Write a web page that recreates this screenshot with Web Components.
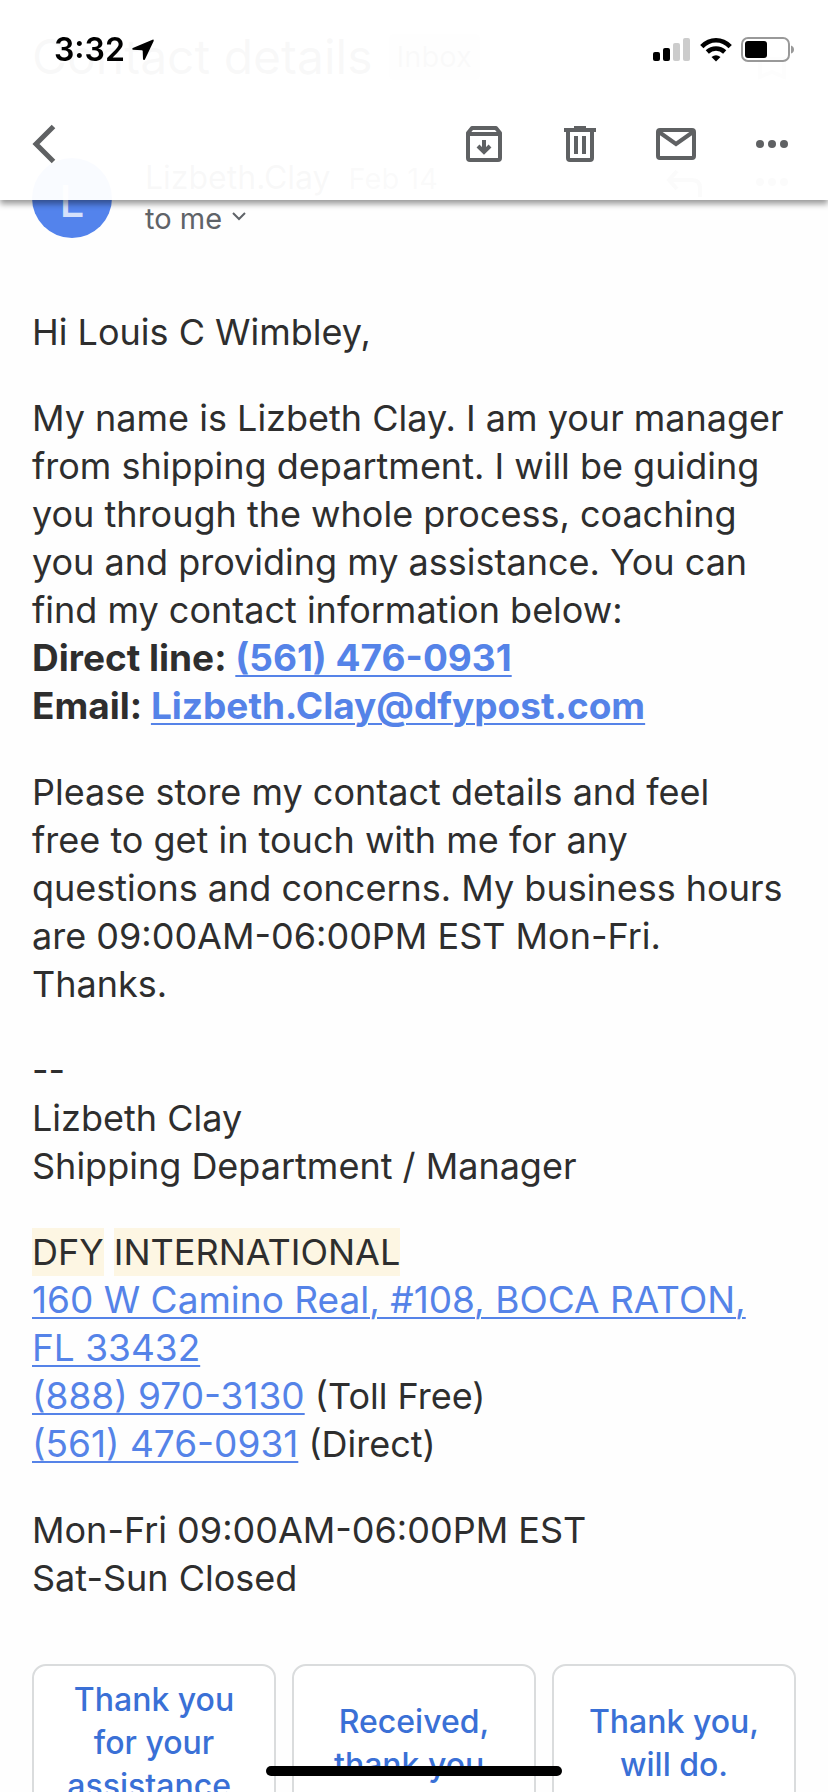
<!DOCTYPE html>
<html lang="en">
<head>
<meta charset="utf-8">
<meta name="viewport" content="width=device-width, initial-scale=1">
<title>Contact details</title>
<style>
  body {
    margin: 0;
    background: #fefefe;
    color: #2e2e2e;
    font-family: Inter, "Liberation Sans", sans-serif;
  }
</style>
</head>
<body>
<mail-screen>
  <status-bar slot="header" time="3:32"></status-bar>
  <mail-toolbar slot="header"></mail-toolbar>

  <mail-subject label="Inbox">Contact details</mail-subject>
  <mail-sender initial="L" name="Lizbeth.Clay" date="Feb 14">to me</mail-sender>

  <mail-body>
    <p>Hi Louis C Wimbley,</p>
    <p>My name is Lizbeth Clay. I am your manager<br>
      from shipping department. I will be guiding<br>
      you through the whole process, coaching<br>
      you and providing my assistance. You can<br>
      find my contact information below:<br>
      <b>Direct line: <a href="tel:+15614760931">(561) 476-0931</a></b><br>
      <b>Email: <a href="mailto:Lizbeth.Clay@dfypost.com">Lizbeth.Clay@dfypost.com</a></b></p>
    <p>Please store my contact details and feel<br>
      free to get in touch with me for any<br>
      questions and concerns. My business hours<br>
      are 09:00AM-06:00PM EST Mon-Fri.<br>
      Thanks.</p>
    <p>--<br>
      Lizbeth Clay<br>
      Shipping Department / Manager</p>
    <p><mark>DFY</mark> <mark>INTERNATIONAL</mark><br>
      <a href="#map">160 W Camino Real, #108, BOCA RATON,<br>FL 33432</a><br>
      <a href="tel:+18889703130">(888) 970-3130</a> (Toll Free)<br>
      <a href="tel:+15614760931">(561) 476-0931</a> (Direct)</p>
    <p>Mon-Fri 09:00AM-06:00PM EST<br>
      Sat-Sun Closed</p>
  </mail-body>

  <reply-row>
    <smart-reply>Thank you<br>for your<br>assistance.</smart-reply>
    <smart-reply>Received,<br>thank you.</smart-reply>
    <smart-reply>Thank you,<br>will do.</smart-reply>
  </reply-row>
</mail-screen>

<script>
// Shared helper: attach a shadow root with the given markup
class BaseElement extends HTMLElement {
  constructor() {
    super();
    const template = document.createElement('template');
    template.innerHTML = this.constructor.markup;
    this.attachShadow({ mode: 'open' });
    this.shadowRoot.appendChild(template.content.cloneNode(true));
  }

  // copy attributes into the elements with the same id
  fill(...names) {
    names.forEach((name) => {
      this.shadowRoot.getElementById(name).textContent = this.getAttribute(name) || '';
    });
  }
}

class MailScreen extends BaseElement {
  static markup = `
    <style>
      :host {
        display: block;
        height: 100vh;
        overflow: hidden;
      }
      header {
        position: fixed;
        top: 0;
        left: 0;
        right: 0;
        z-index: 10;
        background: rgba(255, 255, 255, 0.97);
        box-shadow: 0 4px 6px rgba(0, 0, 0, 0.4);
      }
      main {
        padding: 16px 32px 64px;
      }
      .home {
        position: fixed;
        bottom: 16px;
        left: 50%;
        width: 296px;
        height: 10px;
        margin-left: -148px;
        border-radius: 5px;
        background: #000;
        z-index: 10;
      }
    </style>
    <header><slot name="header"></slot></header>
    <main><slot></slot></main>
    <div class="home"></div>
  `;
}

class StatusBar extends BaseElement {
  static markup = `
    <style>
      :host {
        display: flex;
        align-items: center;
        box-sizing: border-box;
        height: 88px;
        padding: 12px 32px 0 54px;
        color: #000;
      }
      #time {
        font-size: 32px;
        line-height: 40px;
        font-weight: 600;
      }
      .arrow { margin-left: 6px; }
      .right {
        display: flex;
        align-items: center;
        gap: 8px;
        margin-left: auto;
      }
      svg { display: block; }
    </style>
    <span id="time"></span>
    <svg class="arrow" width="24" height="22" viewBox="0 0 24 22">
      <path d="M21.500.7 1.800 9Q.4 10 1.900 10.700l9 .5q.8 0 .8.8l.3 8.200q.8 1.500 1.900.2L22.700 2Q23 .3 21.500.7z"/>
    </svg>
    <div class="right">
      <svg width="40" height="26" viewBox="0 0 40 26">
        <rect x="1" y="15" width="7" height="9" rx="2"/>
        <rect x="11" y="11" width="7" height="13" rx="2"/>
        <g fill="#ccc">
          <rect x="21" y="6" width="7" height="18" rx="2"/>
          <rect x="31" y="1" width="7" height="23" rx="2"/>
        </g>
      </svg>
      <svg width="32" height="26" viewBox="0 0 32 26">
        <g fill="none" stroke="#000" stroke-width="4.600">
          <path d="M1.800 9.600Q8 3.300 16 3.300T30.200 9.600"/>
          <path d="M7.300 15Q11 11.500 16 11.500T24.700 15"/>
        </g>
        <path d="M11.500 20Q16 16.500 20.500 20L16 24.600z"/>
      </svg>
      <svg width="56" height="26" viewBox="0 0 56 26">
        <rect x="2" y="1" width="47" height="23" rx="6" fill="none" stroke="#999" stroke-width="2"/>
        <rect x="5" y="4" width="22" height="17" rx="3"/>
        <path d="M51 8.500q3 1 3 4t-3 4z" fill="#999"/>
      </svg>
    </div>
  `;

  connectedCallback() {
    this.fill('time');
  }
}

class MailToolbar extends BaseElement {
  static markup = `
    <style>
      :host {
        display: flex;
        align-items: center;
        height: 112px;
        padding: 0 8px 0 24px;
      }
      button {
        display: flex;
        align-items: center;
        justify-content: center;
        width: 96px;
        height: 96px;
        padding: 0;
        border: 0;
        background: none;
        color: #5f6163;
      }
      .back {
        justify-content: flex-start;
        margin-right: auto;
      }
    </style>
    <button class="back" aria-label="Back">
      <svg width="48" height="48" viewBox="0 0 48 48" fill="none" stroke="currentColor" stroke-width="5">
        <path d="M29.500 6.500 12 24l17.500 17.500"/>
      </svg>
    </button>
    <button aria-label="Archive">
      <svg width="48" height="48" viewBox="0 0 48 48">
        <path d="M12 8h24l4 5v25q0 2-2 2H10q-2 0-2-2V13z" fill="none" stroke="currentColor" stroke-width="4" stroke-linejoin="round"/>
        <path d="M8 14h32" stroke="currentColor" stroke-width="4"/>
        <path d="M24 20v12M18 26l6 6 6-6" fill="none" stroke="currentColor" stroke-width="4"/>
      </svg>
    </button>
    <button aria-label="Delete">
      <svg width="48" height="48" viewBox="0 0 48 48" fill="none" stroke="currentColor" stroke-width="4">
        <path d="M12 11v27q0 2 2 2h20q2 0 2-2V11M8 10h32M18 8h12M20 16v18M28 16v18"/>
      </svg>
    </button>
    <button aria-label="Mark as unread">
      <svg width="48" height="48" viewBox="0 0 48 48" fill="none" stroke="currentColor" stroke-width="4">
        <rect x="6" y="10" width="36" height="28" rx="2"/>
        <path d="M7 12l17 12 17-12"/>
      </svg>
    </button>
    <button aria-label="More options">
      <svg width="48" height="48" viewBox="0 0 48 48" fill="currentColor">
        <circle cx="12" cy="24" r="4"/><circle cx="24" cy="24" r="4"/><circle cx="36" cy="24" r="4"/>
      </svg>
    </button>
  `;
}

class MailSubject extends BaseElement {
  static markup = `
    <style>
      :host {
        display: flex;
        align-items: center;
        height: 82px;
      }
      h1 {
        margin: 0;
        font-size: 48px;
        line-height: 56px;
        font-weight: 400;
      }
      #label {
        margin-left: 16px;
        padding: 0 8px;
        border-radius: 4px;
        background: #ddd;
        color: #555;
        font-size: 29px;
        line-height: 46px;
      }
      svg {
        margin: 24px 0 0 auto;
      }
    </style>
    <h1><slot></slot></h1>
    <span id="label"></span>
    <svg width="48" height="28" viewBox="0 0 48 28" fill="none" stroke="#bbb" stroke-width="4">
      <path d="M12 22V4h24v18l-12-5z"/>
    </svg>
  `;

  connectedCallback() {
    this.fill('label');
  }
}

class MailSender extends BaseElement {
  static markup = `
    <style>
      :host {
        display: flex;
        align-items: center;
        margin-top: 60px;
        color: #5f6368;
      }
      #initial {
        flex: none;
        width: 80px;
        height: 80px;
        margin-right: 33px;
        border-radius: 50%;
        background: #5383ec;
        color: #d5e1fb;
        font-size: 44px;
        font-weight: 500;
        line-height: 86px;
        text-align: center;
      }
      .who {
        display: flex;
        flex-direction: column;
        gap: 2px;
      }
      .line {
        display: flex;
        align-items: baseline;
        gap: 18px;
        line-height: 38px;
      }
      #name {
        color: #2e2e2e;
        font-size: 32px;
      }
      #date { font-size: 29px; }
      .to {
        display: flex;
        align-items: center;
        gap: 8px;
        padding: 0;
        border: 0;
        background: none;
        color: inherit;
        font: 29px/38px Inter, "Liberation Sans", sans-serif;
      }
      .actions {
        display: flex;
        gap: 40px;
        margin: -32px 0 0 auto;
        color: #777;
      }
      .actions button {
        display: flex;
        padding: 0;
        border: 0;
        background: none;
        color: inherit;
      }
    </style>
    <span id="initial"></span>
    <div class="who">
      <div class="line"><span id="name"></span><span id="date"></span></div>
      <button class="to"><slot></slot>
        <svg width="18" height="18" viewBox="0 0 18 18" fill="none" stroke="currentColor" stroke-width="2">
          <path d="M3 3l6 6 6-6"/>
        </svg>
      </button>
    </div>
    <div class="actions">
      <button aria-label="Reply">
        <svg width="48" height="48" viewBox="0 0 48 48" fill="none" stroke="currentColor" stroke-width="4">
          <path d="M17 13l-8 9 8 9M9 22h23q8 0 8 8v9"/>
        </svg>
      </button>
      <button aria-label="More">
        <svg width="48" height="48" viewBox="0 0 48 48" fill="currentColor">
          <circle cx="12" cy="24" r="4"/><circle cx="24" cy="24" r="4"/><circle cx="36" cy="24" r="4"/>
        </svg>
      </button>
    </div>
  `;

  connectedCallback() {
    this.fill('initial', 'name', 'date');
  }
}

class MailBody extends BaseElement {
  static markup = `
    <style>
      :host {
        display: flex;
        flex-direction: column;
        gap: 38px;
        margin-top: 70px;
        font-size: 36px;
        line-height: 48px;
      }
      ::slotted(p) {
        margin: 0;
      }
    </style>
    <slot></slot>
  `;

  // links and marks sit inside slotted paragraphs, ::slotted can't reach them
  connectedCallback() {
    this.querySelectorAll('a, b').forEach((el) => {
      el.style.fontSize = '37px';
    });
    this.querySelectorAll('a').forEach((a) => {
      a.style.color = '#5583e8';
      a.style.textDecorationThickness = '2px';
      a.style.textUnderlineOffset = '4px';
    });
    this.querySelectorAll('mark').forEach((mark) => {
      mark.style.color = 'inherit';
      mark.style.background = '#fdf6e3';
      mark.style.display = 'inline-block';
    });
  }
}

class ReplyRow extends BaseElement {
  static markup = `
    <style>
      :host {
        display: flex;
        gap: 16px;
        margin-top: 62px;
      }
      ::slotted(*) {
        flex: 1 1 0;
      }
    </style>
    <slot></slot>
  `;
}

class SmartReply extends BaseElement {
  static markup = `
    <style>
      :host { display: flex; }
      button {
        flex: 1;
        padding: 12px 8px;
        border: 2px solid #dadcdd;
        border-radius: 14px;
        background: #fff;
        color: #3a70d6;
        font: 500 32px/43px Inter, "Liberation Sans", sans-serif;
      }
    </style>
    <button><slot></slot></button>
  `;
}

customElements.define('mail-screen', MailScreen);
customElements.define('status-bar', StatusBar);
customElements.define('mail-toolbar', MailToolbar);
customElements.define('mail-subject', MailSubject);
customElements.define('mail-sender', MailSender);
customElements.define('mail-body', MailBody);
customElements.define('reply-row', ReplyRow);
customElements.define('smart-reply', SmartReply);
</script>
</body>
</html>
